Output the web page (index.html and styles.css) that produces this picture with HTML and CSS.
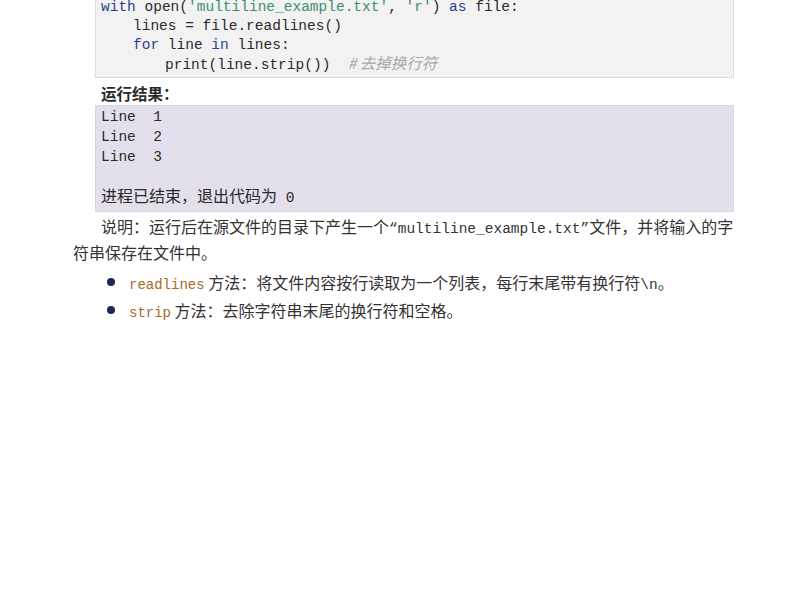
FILE: index.html
```html
<!DOCTYPE html>
<html lang="zh">
<head>
<meta charset="utf-8">
<title>readlines</title>
<link rel="stylesheet" href="styles.css">
</head>
<body>
<div class="page">
  <div class="code">
    <div class="ln"><span class="kw">with</span> open(<span class="str">'multiline_example.txt'</span>, <span class="str">'r'</span>) <span class="kw">as</span> file:</div>
    <div class="ln i1">lines = file.readlines()</div>
    <div class="ln i1"><span class="kw">for</span> line <span class="kw">in</span> lines:</div>
    <div class="ln i2">print(line.strip())  <span class="cm"># 去掉换行符</span></div>
  </div>
  <div class="label">运行结果：</div>
  <div class="output">
    <div class="ln">Line  1</div>
    <div class="ln">Line  2</div>
    <div class="ln">Line  3</div>
    <div class="ln">&nbsp;</div>
    <div class="ln"><span class="cjk">进程已结束，退出代码为</span> 0</div>
  </div>
  <p class="note">说明：运行后在源文件的目录下产生一个<span class="mono">“multiline_example.txt”</span>文件，并将输入的字<br>符串保存在文件中。</p>
  <ul class="list">
    <li><span class="fn">readlines</span> 方法：将文件内容按行读取为一个列表，每行末尾带有换行符<span class="mono">\n</span>。</li>
    <li><span class="fn">strip</span> 方法：去除字符串末尾的换行符和空格。</li>
  </ul>
</div>
</body>
</html>
```
FILE: styles.css
```css
html, body {
  margin: 0;
  padding: 0;
  background: #ffffff;
}
body {
  font-family: "Noto Sans CJK SC", "Noto Sans", sans-serif;
  color: #333333;
}
.page {
  width: 661px;
  margin-left: 73px;
}
.code {
  margin: -3px 0 0 22px;
  padding: 0 6px 3px 5px;
  background: #f2f2f2;
  border: 1px dotted #c8c8c8;
  font-family: "Liberation Mono", "Noto Sans CJK SC", monospace;
  font-size: 14.5px;
  line-height: 19px;
  color: #2a2a2a;
}
.ln {
  white-space: pre;
  height: 19px;
}
.output .ln {
  height: 20px;
}
.i1 { padding-left: 32px; }
.i2 { padding-left: 64px; }
.kw { color: #2c3f8f; }
.str { color: #3f8f6a; }
.cm {
  color: #a8a8a8;
  font-style: italic;
  font-family: "Noto Sans CJK SC", sans-serif;
  font-size: 15.5px;
  line-height: 1;
}
.label {
  margin: 4px 0 0 28px;
  font-size: 15.5px;
  line-height: 22px;
  font-weight: 700;
  color: #2a2a2a;
}
.output {
  margin: 1px 0 0 22px;
  padding: 1px 6px 4px 5px;
  background: #e4e0eb;
  border: 1px dotted #cfcad8;
  font-family: "Liberation Mono", "Noto Sans CJK SC", monospace;
  font-size: 14.5px;
  line-height: 20px;
  color: #2a2a2a;
}
.cjk {
  font-family: "Noto Sans CJK SC", sans-serif;
  font-size: 16px;
  line-height: 1;
}
.note {
  margin: 1px 0 0 0;
  font-size: 16px;
  line-height: 26px;
  text-indent: 28px;
  color: #333333;
}
.mono {
  font-family: "Liberation Mono", monospace;
  font-size: 14.5px;
  line-height: 1;
}
.list {
  list-style: none;
  margin: 3px 0 0 0;
  padding: 0 0 0 34px;
  font-size: 16px;
  line-height: 28px;
  color: #333333;
}
.list li {
  position: relative;
  padding-left: 22px;
}
.list li::before {
  content: "";
  position: absolute;
  left: 0;
  top: 10px;
  width: 8px;
  height: 8px;
  border-radius: 50%;
  background: #1d2752;
}
.fn {
  font-family: "Liberation Mono", monospace;
  font-size: 14px;
  line-height: 1;
  color: #a86a2a;
}
```
